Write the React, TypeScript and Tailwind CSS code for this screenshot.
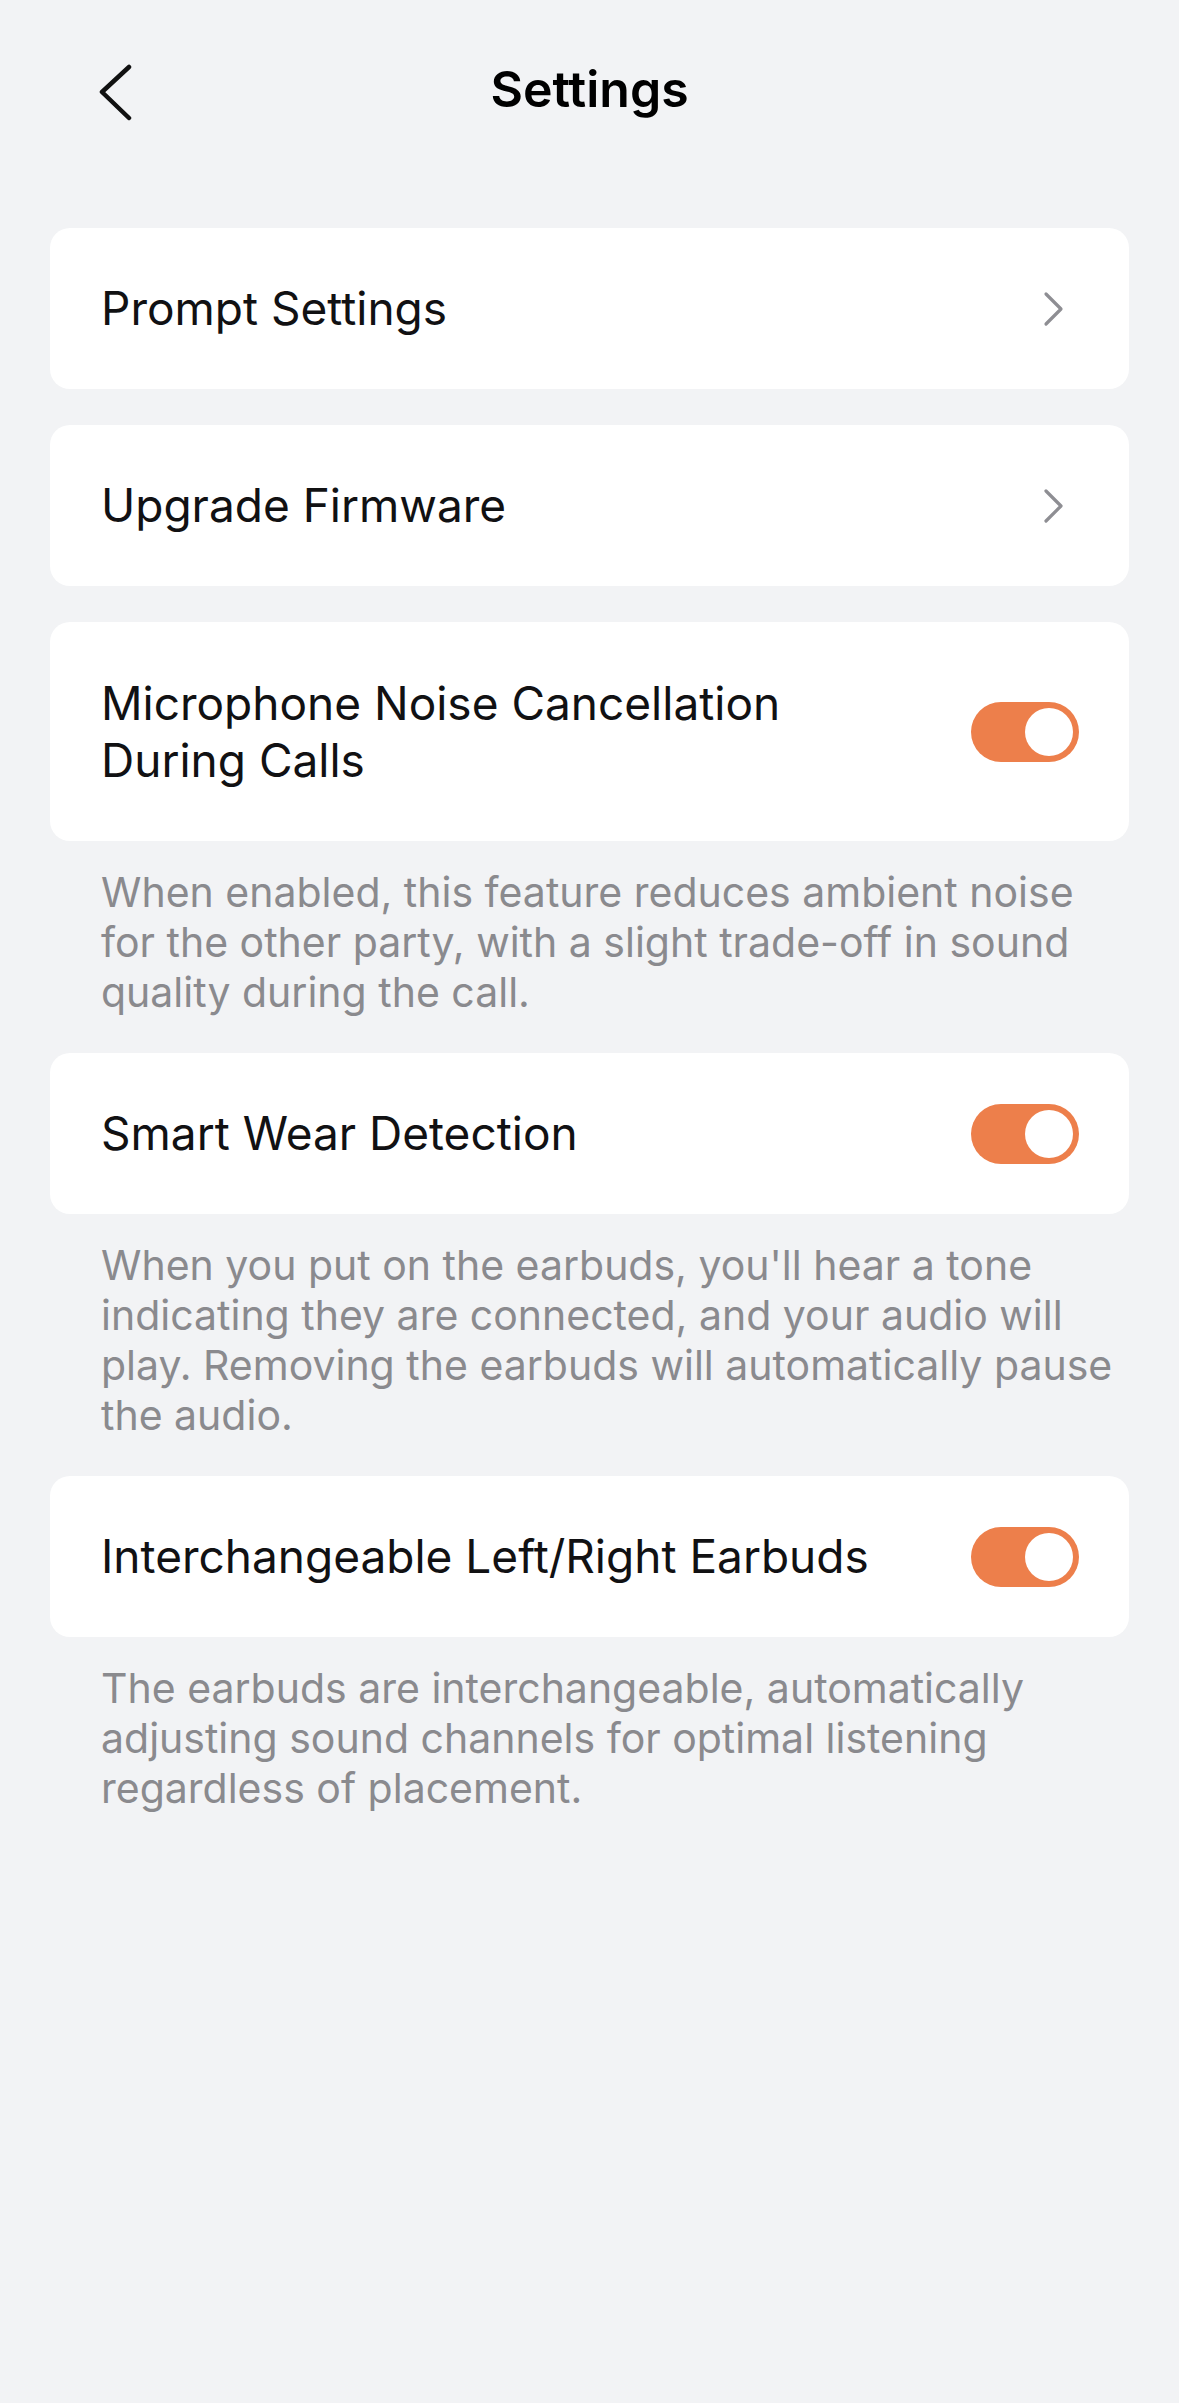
import { ReactNode } from 'react'

const font = { fontFamily: 'Inter, "Noto Sans", sans-serif' }

function Toggle() {
  return (
    <div className="flex h-[60px] w-[108px] shrink-0 items-center justify-end rounded-full bg-[#ed7f4b] pr-[6px]">
      <div className="h-[48px] w-[48px] rounded-full bg-white" />
    </div>
  )
}

function Chevron() {
  return (
    <svg width="24" height="38" viewBox="0 0 24 38" fill="none" className="mr-[14px]">
      <path d="M5 4 L20 19 L5 34" stroke="#8e8e93" strokeWidth="3.2" strokeLinecap="round" strokeLinejoin="round" />
    </svg>
  )
}

function Card({ children, tall }: { children: ReactNode; tall?: boolean }) {
  return (
    <div
      className={
        'flex items-center justify-between rounded-[20px] bg-white pl-[51px] pr-[50px] ' +
        (tall ? 'h-[219px]' : 'h-[161px]')
      }
    >
      {children}
    </div>
  )
}

function Label({ children }: { children: ReactNode }) {
  return <span className="text-[46px] leading-[57px] text-[#111113]">{children}</span>
}

function Note({ children }: { children: ReactNode }) {
  return (
    <p className="whitespace-nowrap pl-[51px] pt-[26px] text-[41px] leading-[50px] text-[#8a8a8e]">
      {children}
    </p>
  )
}

export default function App() {
  return (
    <div className="min-h-[2403px] w-full bg-[#f2f3f5]" style={font}>
      <header className="relative flex h-[178px] items-center justify-center">
        <button className="absolute left-[92px] top-[60px] p-[4px]">
          <svg width="40" height="58" viewBox="0 0 40 58" fill="none">
            <path d="M33 3 L6 28 L33 54" stroke="#111" strokeWidth="4.5" strokeLinecap="round" strokeLinejoin="round" />
          </svg>
        </button>
        <h1 className="text-[50px] font-semibold text-black">Settings</h1>
      </header>

      <div className="mt-[50px] flex flex-col gap-[36px] px-[50px]">
        <Card>
          <Label>Prompt Settings</Label>
          <Chevron />
        </Card>
        <Card>
          <Label>Upgrade Firmware</Label>
          <Chevron />
        </Card>
        <div>
          <Card tall>
            <Label>
              Microphone Noise Cancellation
              <br />
              During Calls
            </Label>
            <Toggle />
          </Card>
          <Note>
            When enabled, this feature reduces ambient noise
            <br />
            for the other party, with a slight trade-off in sound
            <br />
            quality during the call.
          </Note>
        </div>
        <div>
          <Card>
            <Label>Smart Wear Detection</Label>
            <Toggle />
          </Card>
          <Note>
            When you put on the earbuds, you'll hear a tone
            <br />
            indicating they are connected, and your audio will
            <br />
            play. Removing the earbuds will automatically pause
            <br />
            the audio.
          </Note>
        </div>
        <div>
          <Card>
            <Label>Interchangeable Left/Right Earbuds</Label>
            <Toggle />
          </Card>
          <Note>
            The earbuds are interchangeable, automatically
            <br />
            adjusting sound channels for optimal listening
            <br />
            regardless of placement.
          </Note>
        </div>
      </div>
    </div>
  )
}
